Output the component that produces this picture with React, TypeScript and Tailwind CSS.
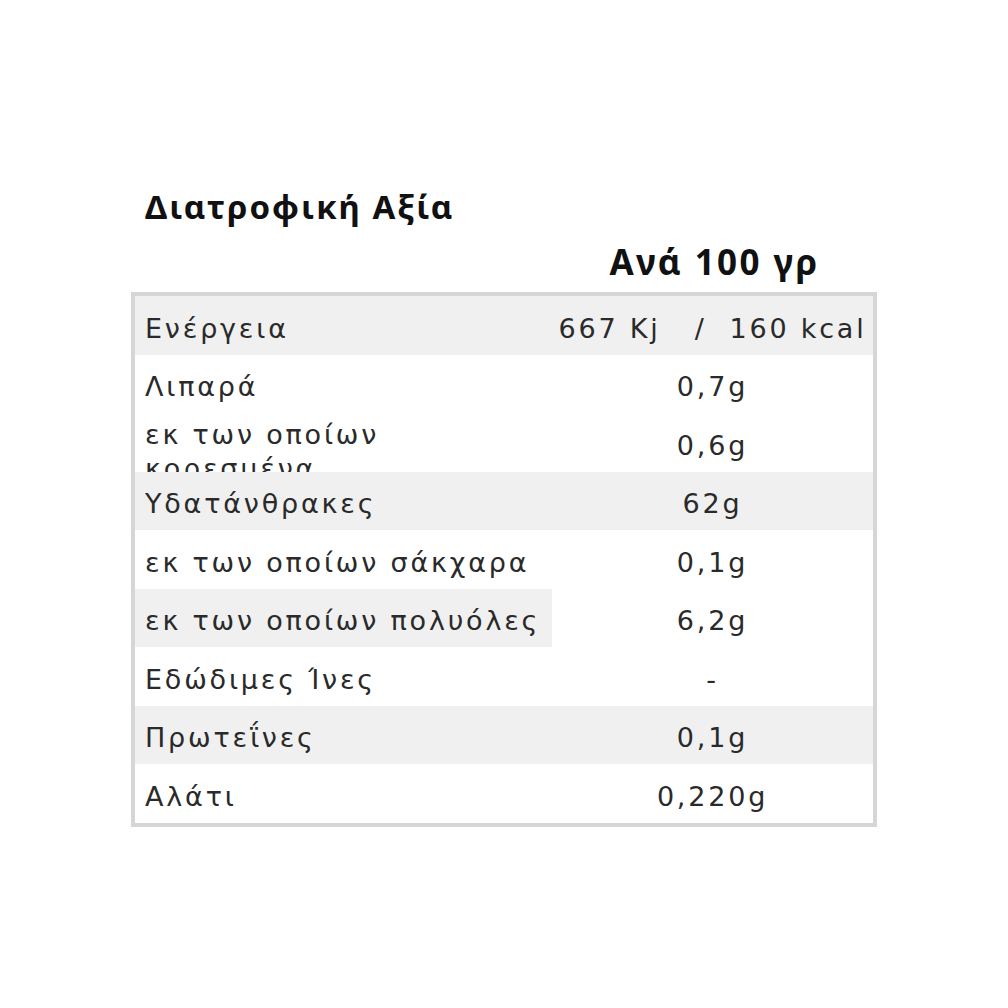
const rows = [
  { label: "Ενέργεια", value: "667 Kj   /  160 kcal", bg: "row" },
  { label: "Λιπαρά", value: "0,7g", bg: "" },
  { label: "εκ των οποίων κορεσμένα", value: "0,6g", bg: "", wrap: true },
  { label: "Υδατάνθρακες", value: "62g", bg: "row" },
  { label: "εκ των οποίων σάκχαρα", value: "0,1g", bg: "" },
  { label: "εκ των οποίων πολυόλες", value: "6,2g", bg: "label" },
  { label: "Εδώδιμες Ίνες", value: "-", bg: "" },
  { label: "Πρωτεΐνες", value: "0,1g", bg: "row" },
  { label: "Αλάτι", value: "0,220g", bg: "" },
];

const App = () => {
  return (
    <div className="w-[1008px] h-[1008px] bg-white pt-[181px] pl-[131px]">
      <div className="w-[746px]">
        <h2 className="pl-[14px] text-[33px] leading-[52px] font-bold tracking-[2px] text-[#111] font-['Noto_Sans',sans-serif]">
          Διατροφική Αξία
        </h2>
        <div className="flex h-[59px] items-center">
          <div className="w-[421px]" />
          <div className="flex-1 text-center text-[35px] font-bold tracking-[2.4px] text-[#111] font-['Noto_Sans',sans-serif]">
            Ανά 100 γρ
          </div>
        </div>
        <div className="border-4 border-[#d6d6d6] font-['DejaVu_Sans',Verdana,sans-serif] text-[27px] tracking-[2.8px] text-[#2a2a2a]">
          {rows.map((r) => (
            <div
              key={r.label}
              className={`flex h-[58.5px] ${r.bg === "row" ? "bg-[#f0f0f0]" : ""}`}
            >
              {/* κελί ετικέτας: η διπλή γραμμή κόβεται όπως στο πρωτότυπο */}
              <div
                className={`w-[417px] pl-[10px] flex overflow-hidden ${
                  r.wrap ? "items-start pt-[5px] leading-[34px]" : "items-center pt-[7px] leading-[34px]"
                } ${r.bg === "label" ? "bg-[#f0f0f0]" : ""}`}
              >
                <span>{r.label}</span>
              </div>
              <div className="flex-1 flex items-center justify-center pt-[7px] whitespace-pre">
                {r.value}
              </div>
            </div>
          ))}
        </div>
      </div>
    </div>
  );
};

export default App;
